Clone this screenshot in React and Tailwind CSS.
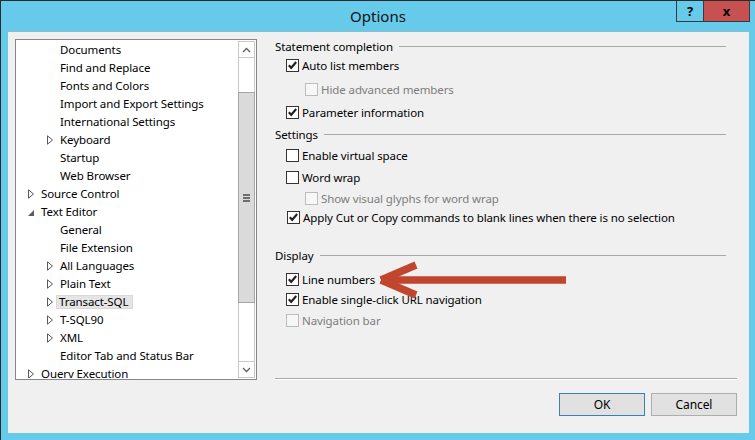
import React from "react";

const FONT = { fontFamily: '"Noto Sans", "Open Sans", sans-serif' };

const treeItems = [
  { l: 2, t: "Documents" },
  { l: 2, t: "Find and Replace" },
  { l: 2, t: "Fonts and Colors" },
  { l: 2, t: "Import and Export Settings" },
  { l: 2, t: "International Settings" },
  { l: 2, t: "Keyboard", a: "c" },
  { l: 2, t: "Startup" },
  { l: 2, t: "Web Browser" },
  { l: 1, t: "Source Control", a: "c" },
  { l: 1, t: "Text Editor", a: "e" },
  { l: 2, t: "General" },
  { l: 2, t: "File Extension" },
  { l: 2, t: "All Languages", a: "c" },
  { l: 2, t: "Plain Text", a: "c" },
  { l: 2, t: "Transact-SQL", a: "c", sel: true },
  { l: 2, t: "T-SQL90", a: "c" },
  { l: 2, t: "XML", a: "c" },
  { l: 2, t: "Editor Tab and Status Bar" },
  { l: 1, t: "Query Execution", a: "c" },
];

function Expander({ type }) {
  if (type === "c") {
    return (
      <svg width="7" height="10" viewBox="0 0 7 10" className="ml-[3px]">
        <path d="M0.5 0.8 L5.5 5 L0.5 9.2 Z" fill="none" stroke="#5a5a5a" strokeWidth="1" />
      </svg>
    );
  }
  if (type === "e") {
    return (
      <svg width="7" height="10" viewBox="0 0 7 10" className="ml-[3px]">
        <path d="M6 3 L6 9 L0 9 Z" fill="#5b5b5b" />
      </svg>
    );
  }
  return null;
}

function TreeRow({ item }) {
  return (
    <div className={`flex h-[18px] shrink-0 items-center ${item.l === 1 ? "pl-[8px]" : "pl-[27px]"}`}>
      <div className="flex w-[16px] items-center">{item.a && <Expander type={item.a} />}</div>
      {item.sel ? (
        <span className="-ml-[4px] flex h-[14px] items-center border border-[#d9d9d9] bg-[#e5e5e5] pl-[2px] pr-[4px] leading-none">
          {item.t}
        </span>
      ) : (
        <span className="whitespace-nowrap leading-none">{item.t}</span>
      )}
    </div>
  );
}

function Scrollbar() {
  return (
    <div className="flex w-[17px] shrink-0 flex-col">
      <div className="flex h-[17px] items-center justify-center border border-[#c8c8c8] bg-white">
        <svg width="9" height="6" viewBox="0 0 9 6">
          <path d="M1 5 L4.5 1.5 L8 5" fill="none" stroke="#606060" strokeWidth="1.3" />
        </svg>
      </div>
      <div className="h-[34px] border-x border-[#c8c8c8] bg-white" />
      <div className="flex h-[211px] items-center justify-center border border-[#a6a6a6] bg-[#dadada]">
        <div className="flex flex-col gap-[1px]">
          <div className="h-[2px] w-[7px] bg-[#6e6e6e]" />
          <div className="h-[2px] w-[7px] bg-[#6e6e6e]" />
          <div className="h-[2px] w-[7px] bg-[#6e6e6e]" />
        </div>
      </div>
      <div className="flex-1 border-x border-[#c8c8c8] bg-white" />
      <div className="flex h-[17px] items-center justify-center border border-[#c8c8c8] bg-white">
        <svg width="9" height="6" viewBox="0 0 9 6">
          <path d="M1 1 L4.5 4.5 L8 1" fill="none" stroke="#606060" strokeWidth="1.3" />
        </svg>
      </div>
    </div>
  );
}

function Check({ checked, disabled }) {
  return (
    <div
      className={`flex h-[13px] w-[13px] shrink-0 items-center justify-center border ${
        disabled ? "border-[#bcbcbc] bg-[#f7f7f7]" : "border-[#333333] bg-white"
      }`}
    >
      {checked && (
        <svg width="11" height="11" viewBox="0 0 11 11">
          <path d="M1.8 5.2 L4.2 7.8 L9.2 2" fill="none" stroke="#222222" strokeWidth="2.1" />
        </svg>
      )}
    </div>
  );
}

function Option({ label, checked, disabled, indent, mt, extra }) {
  return (
    <div
      className={`flex h-[18px] items-center ${indent ? "pl-[30px]" : extra ? "pl-[12px]" : "pl-[11px]"}`}
      style={{ marginTop: mt }}
    >
      <Check checked={checked} disabled={disabled} />
      <span className={`ml-[3px] mt-[1px] whitespace-nowrap leading-none ${disabled ? "text-[#7d7d7d]" : "text-black"}`}>
        {label}
      </span>
    </div>
  );
}

function Heading({ label, mt }) {
  return (
    <div className="flex h-[18px] w-[451px] items-center" style={{ marginTop: mt }}>
      <span className="mt-[1px] whitespace-nowrap leading-none">{label}</span>
      <div className="ml-[6px] h-px flex-1 bg-[#a9a9a9]" />
    </div>
  );
}

export default function App() {
  return (
    <div
      className="relative flex h-[440px] w-[755px] flex-col overflow-hidden border-l border-t border-[#2b2b2b] bg-[#66cbea] text-[11.5px] tracking-[-0.1px] text-black"
      style={FONT}
    >
      {/* Title bar */}
      <div className="flex h-[30px] shrink-0 items-center justify-center">
        <span className="mt-[1px] text-[15px] leading-none tracking-normal text-[#111]">Options</span>
      </div>
      <div className="absolute right-[5px] top-0 flex h-[21px] tracking-normal">
        <div className="flex w-[28px] items-center justify-center border border-t-0 border-[#3a3a3a] text-[13px] font-bold leading-none">
          ?
        </div>
        <div className="flex w-[46px] items-center justify-center border-b border-r border-[#3a3a3a] bg-[#c75050] text-[13px] font-bold leading-none">
          x
        </div>
      </div>

      {/* Content */}
      <div className="mb-[7px] ml-[7px] mr-[6px] flex flex-1 flex-col border-t border-[#8fb9cf] bg-[#f0f0f0] pl-[7px] pr-[12px] pt-[5px]">
        <div className="flex h-[343px]">
          {/* Tree */}
          <div className="mt-[2px] flex h-[341px] w-[242px] border border-[#828790] bg-white p-[1px]">
            <div className="flex flex-1 flex-col overflow-hidden">
              {treeItems.map((it) => (
                <TreeRow key={it.t} item={it} />
              ))}
            </div>
            <Scrollbar />
          </div>

          {/* Right panel */}
          <div className="ml-[18px] flex flex-1 flex-col">
            <Heading label="Statement completion" mt={0} />
            <Option label="Auto list members" checked mt={1} />
            <Option label="Hide advanced members" disabled indent mt={6} />
            <Option label="Parameter information" checked mt={5} />
            <Heading label="Settings" mt={4} />
            <Option label="Enable virtual space" mt={3} />
            <Option label="Word wrap" mt={4} />
            <Option label="Show visual glyphs for word wrap" disabled indent mt={3} />
            <Option label="Apply Cut or Copy commands to blank lines when there is no selection" checked extra mt={1} />
            <Heading label="Display" mt={20} />
            <Option label="Line numbers" checked mt={6} />
            <Option label="Enable single-click URL navigation" checked mt={2} />
            <Option label="Navigation bar" disabled mt={3} />
            <div className="flex-1" />
            <div className="h-[2px] border-t border-[#a9a9a9] bg-white" />
          </div>
        </div>

        {/* Buttons */}
        <div className="mt-[13px] flex justify-end gap-[6px]">
          <button className="flex h-[23px] w-[86px] items-center justify-center border border-[#3c7fb1] bg-[#e1e1e1] text-[12px] leading-none">
            OK
          </button>
          <button className="flex h-[23px] w-[86px] items-center justify-center border border-[#adadad] bg-[#e1e1e1] text-[12px] leading-none">
            Cancel
          </button>
        </div>
      </div>

      {/* Annotation arrow */}
      <svg className="pointer-events-none absolute left-0 top-0" width="755" height="440" viewBox="0 0 755 440">
        <g stroke="#c1462d" strokeWidth="7.5" fill="none" strokeLinecap="butt">
          <line x1="384" y1="279" x2="565" y2="279" />
          <line x1="380" y1="279" x2="415" y2="264" />
          <line x1="380" y1="279" x2="415" y2="294" />
        </g>
      </svg>
    </div>
  );
}
